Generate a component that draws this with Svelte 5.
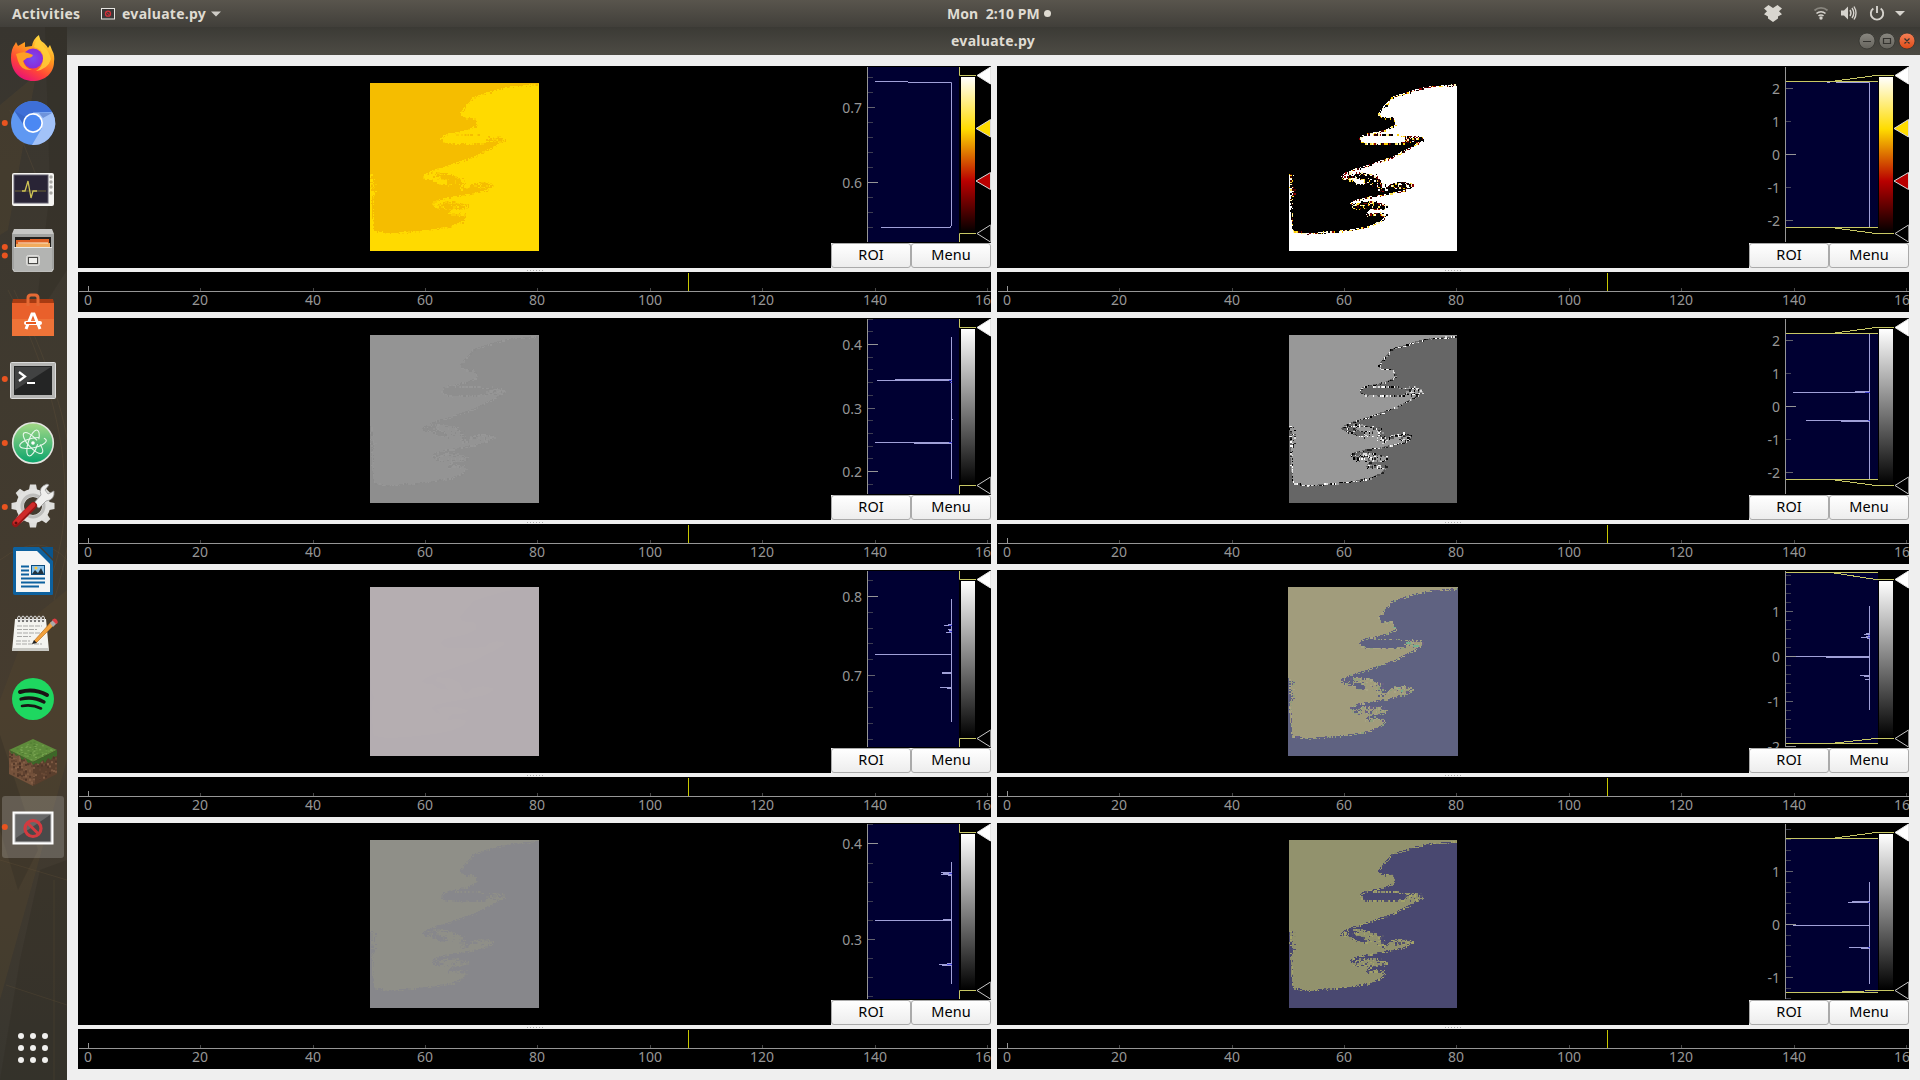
<script>
  // Outline of the left-hand domain, in plot units (504 x 504).
  const outline = [
    [0,0],[504,0],[504,4],[463,7],[413,11],[373,21],[333,34],[306,43],[298,56],[283,71],[269,89],[271,99],
    [288,104],[308,104],[315,111],[318,126],[293,139],[263,147],[235,151],[218,158],[211,168],[218,176],[235,182],
    [303,182],[345,179],[355,168],[378,162],[398,165],[401,173],[384,181],[373,189],[343,203],[313,220],[273,233],
    [228,249],[188,261],[163,273],[155,281],[168,288],[188,291],[204,302],[232,306],[222,290],[195,280],[201,269],
    [238,272],[268,286],[278,311],[290,318],[304,303],[338,296],[366,302],[369,308],[343,322],[293,333],[233,343],
    [198,351],[183,361],[195,374],[210,379],[201,365],[222,357],[256,357],[292,368],[284,377],[246,378],[235,388],
    [231,396],[248,395],[262,392],[288,400],[276,414],[243,428],[188,439],[123,446],[53,451],[13,444],[8,431],
    [6,341],[13,331],[3,308],[3,276],[0,268]
  ];
  const shape = 'M' + outline.map((p) => p.join(' ')).join('L') + 'Z';
  const CELL = 3.94;

  function rng(seed) {
    let s = seed;
    return () => ((s = (s * 1664525 + 1013904223) % 4294967296) / 4294967296);
  }

  // Noisy cells along the outline and inside the turbulent pockets.
  function speckle(palette, seed, density) {
    const r = rng(seed);
    const out = palette.map(() => '');
    const put = (x, y) => {
      const cx = Math.round(x / CELL), cy = Math.round(y / CELL);
      if (cx < 0 || cy < 0 || cx > 127 || cy > 127) return;
      const k = Math.floor(r() * palette.length);
      out[k] += `M${(cx * CELL).toFixed(1)} ${(cy * CELL).toFixed(1)}h4v4h-4z`;
    };
    for (let i = 2; i < outline.length - 1; i++) {
      const [x0, y0] = outline[i], [x1, y1] = outline[i + 1];
      const n = Math.ceil(Math.hypot(x1 - x0, y1 - y0) / 3.5);
      for (let j = 0; j < n; j++) {
        if (r() < density) put(x0 + ((x1 - x0) * j) / n + (r() - 0.5) * 2.5, y0 + ((y1 - y0) * j) / n + (r() - 0.5) * 2.5);
      }
    }
    // Upper rim of the long tongue.
    for (let x = 235; x < 385; x += 4) if (r() < density) put(x, 151 + (x - 235) * 0.05);
    const pockets = [[372,167,28,14,50],[338,305,34,12,60],[276,310,14,14,26],[186,278,28,12,30],
      [250,290,36,18,30],[240,365,52,13,90],[262,393,30,6,20],[8,305,10,36,26]];
    for (const [cx, cy, rx, ry, n] of pockets) {
      for (let j = 0; j < n * density; j++) {
        const a = r() * 6.283, d = Math.sqrt(r());
        put(cx + Math.cos(a) * rx * d, cy + Math.sin(a) * ry * d);
      }
    }
    return out.map((d, i) => ({ d, fill: palette[i] }));
  }

  const range = (start, step, n) => Array.from({ length: n }, (_, i) => Math.floor(start + step * i));

  // major: [y, label, tick length]; curve: one path per histogram
  const views = [
    { h: 202, side: 0, heat: true, a: '#f5bd00', b: '#ffda00', sp: ['#f5bd00', '#ffda00', '#fbcc00'], den: .7,
      major: [[41, '0.7', 7], [116, '0.6', 10]], minor: [11, 26, 56, 71, 86, 101, 131, 146, 161],
      curve: 'M54 15.5H87M87 16.5H130.5V160M129.500 160V161.500H60' },
    { h: 202, side: 1, heat: true, a: '#000', b: '#fff', sp: ['#ffe34d', '#ffcf00', '#8c0000', '#000', '#fff', '#450000', '#fff6b8', '#000'], den: .95,
      major: [[22, '2', 7], [55, '1', 5], [88, '0', 10], [121, '-1', 5], [154, '-2', 7]], minor: [],
      region: [15, 161], curve: 'M88 16.500H91M97 16.500H130.500V161' },
    { h: 202, side: 0, a: '#949494', b: '#8e8e8e', sp: ['#949494', '#8c8c8c', '#979797'], den: .8,
      major: [[26, '0.4', 10], [90, '0.3', 7], [153, '0.2', 10]], minor: [1, 13, 39, 51, 64, 77, 102, 115, 128, 140, 166],
      curve: 'M130.500 19V161M56 62.500H130M74 61.500H130M54 124.500H130M93 125.500H130M130 101.500H132', dots: [[128, 62], [129, 64], [128, 124]] },
    { h: 202, side: 1, a: '#989898', b: '#666', sp: ['#fff', '#000', '#ddd', '#222', '#555', '#989898'], den: 1.1,
      major: [[22, '2', 7], [55, '1', 5], [88, '0', 10], [121, '-1', 5], [154, '-2', 7]], minor: [],
      region: [15, 161], curve: 'M130.500 15V161M54 74.500H130M116 73.500H130M67 102.500H130M102 103.500H130', dots: [[126, 74], [129, 102]] },
    { h: 203, side: 0, a: '#b5aeb1', b: '#b4adb1', sp: [], den: 0,
      major: [[26, '0.8', 10], [105, '0.7', 7]], minor: [10, 42, 58, 73, 89, 121, 137, 153, 169],
      curve: 'M130.500 29V152M54 84.500H130M123 55.500H130M127 54.500H130M127 59.500H130M128 60.500H130M125 62.500H130M121 102.500H130M121 103.500H130M119 117.500H130M126 118.500H130', dots: [[128, 55], [128, 61]] },
    { h: 203, side: 1, a: '#a19c7c', b: '#5f6281', sp: ['#a19c7c', '#5f6281', '#6b6186', '#8f9f7c', '#a8a584'], den: 1, tint: true,
      major: [[41, '1', 7], [86, '0', 10], [131, '-1', 7], [176, '-2', 10]], minor: [5, 14, 23, 32, 50, 59, 68, 77, 95, 104, 113, 122, 140, 149, 158, 167],
      region: [2, 173], curve: 'M130.500 36V140M57 86.500H130M87 87.500H130M127 63.500H130M125 64.500H130M127 66.500H130M122 67.500H130M128 68.500H130M121 105.500H130M125 106.500H130M126 109.500H130', dots: [[129, 65], [129, 67]] },
    { h: 202, side: 0, a: '#8f8f88', b: '#87878b', sp: ['#8f8f88', '#87878b', '#8b8b89'], den: .9,
      major: [[20, '0.4', 10], [116, '0.3', 7]], minor: [1, 40, 59, 78, 97, 135, 154, 173],
      curve: 'M130.500 39V161M54 97.500H130M122 96.500H130M120 49.500H130M122 50.500H130M120 51.500H130M127 52.500H130M118 141.500H130M126 140.500H130M121 142.500H130', dots: [[128, 50], [126, 141]] },
    { h: 202, side: 1, a: '#92926d', b: '#494870', sp: ['#92926d', '#494870', '#8c8d6c', '#55546e', '#a2a269'], den: 1,
      major: [[48, '1', 7], [101, '0', 10], [154, '-1', 7]], minor: [...range(6, 10.6, 4), ...range(59, 10.6, 4), ...range(112, 10.6, 4), 165, 175],
      region: [15, 169], curve: 'M130.500 59V161M54 102.500H130M109 79.500H130M113 78.500H130M110 124.500H130M122 125.500H130', dots: [[129, 79], [129, 124]] }
  ].map((v, i) => ({ ...v, cells: v.sp.length ? speckle(v.sp, 91 + i * 17, v.den) : [] }));

  const times = [0, 20, 40, 60, 80, 100, 120, 140, 160].map((t, i) => ({ t, x: Math.floor(10.2 + i * 112.4) }));

  const dock = ['firefox', 'chromium', 'monitor', 'files', 'software', 'terminal', 'atom', 'tools', 'writer', 'notes', 'spotify', 'block', 'viewer'];
  const running = { chromium: [0], files: [-4, 4.5], terminal: [0], atom: [0], tools: [0], viewer: [0] };
  const teeth = [0, 45, 90, 135, 180, 225, 270, 315];
  const rings = [0, 1, 2, 3, 4, 5, 6];
  const grass = rng(5);
  const blockCells = Array.from({ length: 190 }, () => {
    const left = grass() < 0.5, u = Math.floor(grass() * 12) * 2, w = Math.floor(grass() * 13) * 2;
    return { x: left ? 9 + u : 33 + u, y: left ? 751 + u / 2 + w * .82 : 762 - u / 2 + w * .82, c: ['#5b3f2e', '#8a634a', '#6f4d38', '#4a3226'][Math.floor(grass() * 4)] };
  });
  const topCells = Array.from({ length: 70 }, () => {
    const u = grass() * 10.500, w = grass() * 10.500;
    return { x: 32 + (u - w) * 2, y: 740 + u + w, c: ['#6c9a45', '#4f7c32', '#7aa552'][Math.floor(grass() * 3)] };
  });
</script>

<div class="desktop">
  <header class="topbar">
    <span class="activities">Activities</span>
    <svg class="appicon" width="14" height="12" viewBox="0 0 14 12">
      <rect x=".5" y=".5" width="13" height="10.500" fill="#3b3838" stroke="#e6e4e0" />
      <circle cx="7" cy="5.700" r="2.500" fill="none" stroke="#d8303a" stroke-width="1.300" /><path d="M5.500 4.200l3 3" stroke="#d8303a" />
    </svg>
    <span class="appname">evaluate.py</span>
    <svg class="caret" width="10" height="6" viewBox="0 0 10 6"><path d="M0 .5h10L5 5.500z" fill="#cfccc6" /></svg>
    <span class="clock">Mon&nbsp; 2:10 PM</span><span class="bullet"></span>
    <svg class="tray" width="140" height="27" viewBox="1764 0 140 27" fill="none" stroke="#d6d3cd">
      <path fill="#d9d6cf" stroke="none" d="M1768.500 5l4.500 3 4.500-3 4.500 3.400-3 2.800 3 3-4 2.300v2l-5 3.500-5-3.500v-2l-4-2.300 3-3-3-2.800z" />
      <g transform="translate(1821 0)"><path d="M-6.500 10.500a9.500 9.500 0 0 1 13 0" stroke="#88857e" stroke-width="1.800" /><path d="M-4.500 13.500a6.500 6.500 0 0 1 9 0M-2.500 16a3.500 3.500 0 0 1 5 0" stroke-width="1.600" /><circle cy="18" r="1.700" fill="#d6d3cd" stroke="none" /></g>
      <path fill="#d6d3cd" stroke="none" d="M1841 10.500h3l4-4v13l-4-4h-3z" /><path d="M1850 10q2 3 0 6M1852 8q3.500 5 0 10M1854 6.500q4 6.500 0 13" stroke-width="1.400" />
      <path d="M1873.300 8.500a6.200 6.200 0 1 0 7.400 0M1877 6v7" stroke-width="1.900" />
      <path fill="#d6d3cd" stroke="none" d="M1895 11h10l-5 5z" />
    </svg>
  </header>

  <div class="body">
    <nav class="dock">
      <svg class="wall" width="67" height="1053" viewBox="0 27 67 1053" preserveAspectRatio="none">
        <path fill="#57462f" opacity=".32" d="M0 105L36 75 8 230 0 235zM0 700L30 620 67 590V760L0 1000zM15 660L67 630V690L10 790z" />
        <path fill="#2a2822" opacity=".28" d="M45 27H67V270L35 320 50 190zM0 735L38 850 18 890 0 830zM40 870L67 860V1080H0L20 960z" />
        <path fill="none" stroke="#6a573b" opacity=".25" d="M8 290C70 410 80 520 45 590M14 290C80 430 85 500 54 600M10 110L40 185M0 860L67 880M6 985L67 1005M54 880V1080M0 560Q40 530 67 560" />
      </svg>
      {#each dock as name, i}
        <div class="slot" class:active={name === 'viewer'}>
          <svg width="67" height="64" viewBox="0 {27 + 64 * i} 67 64">
            {#if name === 'viewer'}<rect x="2" y="796" width="62" height="62" rx="3" fill="#fff" opacity=".19" />{/if}
            {#each running[name] ?? [] as dy}<circle cx="4.800" cy={59 + 64 * i + dy} r="3" fill="#e95420" />{/each}
            {#if name === 'firefox'}
              <defs>
                <linearGradient id="ff" x1=".85" y1="0" x2=".3" y2="1"><stop offset="0" stop-color="#fff44f" /><stop offset=".4" stop-color="#ff9a1e" /><stop offset=".72" stop-color="#ff4438" /><stop offset="1" stop-color="#e8107a" /></linearGradient>
                <radialGradient id="ffp"><stop offset="0" stop-color="#7a4af0" /><stop offset="1" stop-color="#8a2bd8" /></radialGradient>
              </defs>
              <path fill="url(#ff)" d="M11 58Q11 49 15 44l1-2 2 4 7-4v5l7-1q1-7 7-11 0 5 5 8 3 3 4 5l2-3 2 5q3 5 2 12C54 73 45 81 33 81S11 72 11 58z" />
              <path fill="#ffcf38" d="M39 36q-4 5-5 11 9 2 9 11 0 9-7 13 12-2 15-12-2-8-6-11-5-5-6-12z" opacity=".85" />
              <circle cx="33" cy="58.500" r="10" fill="url(#ffp)" />
              <path fill="#ff9f24" d="M16 54q7-3 12-1l5 2q-1 3-6 3l-4 3q2 7 9 9-11 1-14-9z" />
            {:else if name === 'chromium'}
              <circle cx="33" cy="123" r="22" fill="#5f98f2" /><path fill="#3e6fd7" d="M14.500 111A22 22 0 0 1 52 112L33 113l-10 11z" />
              <path fill="#a2c2f8" d="M33 112.500H52.500A22 22 0 0 1 32 145l10-17z" /><path fill="#315bb5" opacity=".45" d="M14.500 111l9 13 2-7zM39 113h13l-9 5z" />
              <circle cx="33" cy="123" r="10" fill="#fff" /><circle cx="33" cy="123" r="8.300" fill="#4b88f3" />
            {:else if name === 'monitor'}
              <rect x="12" y="173" width="42" height="33" rx="2" fill="#f5f4f1" /><rect x="14" y="175" width="34" height="28" fill="#292436" stroke="#656070" />
              <path d="M15 191h31" stroke="#6d6234" /><path d="M22 191h3l3-10 3 17 2-7h4" fill="none" stroke="#d0c455" stroke-width="1.300" />
              {#each [177, 182, 187, 193] as y}<circle cx="51" cy={y} r="1.700" fill="#aaa9a5" />{/each}
            {:else if name === 'files'}
              <path d="M14 229h38l2 5v35l-2 3H14l-2-3v-35z" fill="#c7c7c5" /><path d="M12 234h42v35H12z" fill="#a2a3a1" /><rect x="15" y="237" width="36" height="13" fill="#211f1d" />
              <path d="M16 240h14v-1h19v9H16z" fill="#df6226" /><path d="M16 244l34-1v5H16z" fill="#f1aa5c" /><path d="M18 243h30" stroke="#fff0d0" />
              <rect x="14" y="247" width="38" height="24.500" fill="#b3b4b2" /><path d="M14 247.500h38" stroke="#e9e9e7" />
              <rect x="26.500" y="255.500" width="13" height="10" rx="2" fill="#c9c9c6" stroke="#dededc" /><rect x="28.500" y="257.500" width="9" height="6" fill="#efefec" stroke="#4a4a48" />
            {:else if name === 'software'}
              <path d="M13 299h40l1 4H12z" fill="#a83b12" /><rect x="12" y="303" width="42" height="33" fill="#ee7338" /><path d="M12 303h42v16H12z" fill="#e9602b" />
              <path d="M28 306v-8q0-3 3-3h4q3 0 3 3v8" fill="none" stroke="#e56a35" stroke-width="3" />
              <path d="M26 329l6-15h2l6 15" fill="none" stroke="#fff" stroke-width="3" /><rect x="24" y="321" width="18" height="4" rx="2" fill="#fff" /><path d="M26 323h10" stroke="#e95b20" stroke-width="2" />
            {:else if name === 'terminal'}
              <rect x="10.500" y="362.500" width="45" height="36" rx="1" fill="#b5b5b3" stroke="#ddd" /><rect x="14" y="366" width="38" height="29" fill="#242525" /><path d="M15 367h36L15 390z" fill="#414242" />
              <path d="M19 372l6 4.500-6 4.500" fill="none" stroke="#fff" stroke-width="2.200" /><path d="M27 383h8" stroke="#fff" stroke-width="2" />
            {:else if name === 'atom'}
              <defs><linearGradient id="at" x2="0" y2="1"><stop offset="0" stop-color="#a5d986" /><stop offset="1" stop-color="#0aa46c" /></linearGradient></defs>
              <circle cx="33" cy="443" r="20.300" fill="url(#at)" stroke="#e3e5e0" stroke-width="1.600" />
              <g fill="none" stroke="#e9f8ec" stroke-width="1.100"><ellipse cx="33" cy="443" rx="13.500" ry="4.800" transform="rotate(-12 33 443)" stroke-dasharray="52 5" /><ellipse cx="33" cy="443" rx="13.500" ry="4.800" transform="rotate(48 33 443)" stroke-dasharray="46 5" /><ellipse cx="33" cy="443" rx="13.500" ry="4.800" transform="rotate(108 33 443)" stroke-dasharray="40 5" /></g><circle cx="33" cy="443" r="1.800" fill="#fff" />
            {:else if name === 'tools'}
              {#each teeth as t}<path d="M28.500 492l1.500-7.500h6l1.500 7.500z" fill="#dededc" transform="rotate({t} 33 506)" />{/each}
              <circle cx="33" cy="506" r="13" fill="none" stroke="#e2e2e0" stroke-width="8" /><circle cx="33" cy="506" r="11" fill="none" stroke="#bdbdbb" stroke-width="3" />
              <path d="M33 504l8-9q-3-8 6-11l2 1-4 5 3 4 6-3q1 9-8 10l-7 7z" fill="#efefee" stroke="#999" stroke-width=".8" />
              <path d="M15.500 523.500l18-18" stroke="#941616" stroke-width="7" stroke-linecap="round" /><path d="M15.500 522.500l17.500-17.500" stroke="#cf2a2a" stroke-width="4.600" stroke-linecap="round" /><circle cx="16" cy="523" r="1.500" fill="#5d0e0e" />
            {:else if name === 'writer'}
              <path d="M14 547h25l14 14v33q0 1-1 1H15q-2 0-2-2v-45z" fill="#0d619f" /><path d="M16 551h21l13 13v28H16z" fill="#f5f6f6" /><path d="M41 547h12v12z" fill="#0a548b" />
              <path d="M21 566.500h8M21 570.500h8M21 574.500h8M21 578.500h24M21 582.500h24M21 586.500h18" stroke="#0d619f" stroke-width="2" /><rect x="31.500" y="565.500" width="13" height="9" fill="#8bc4ec" stroke="#0d4d7f" /><path d="M32 574l3-4 3 3 3-5 3 6z" fill="#22333e" /><circle cx="36" cy="568" r="1.500" fill="#ffc73a" />
            {:else if name === 'notes'}
              <path d="M15 619h31l3 32H12z" fill="#f4f4f0" /><path d="M12 648h37v3H12z" fill="#c8c8c3" />
              {#each rings as n}<ellipse cx={19 + n * 4} cy="619" rx="1.500" ry="3" fill="none" stroke="#ddd" /><circle cx={19 + n * 4} cy="621" r="1" fill="#555" />{/each}
              <path d="M17 626h25M17 629.500h20M17 633h25M17 636.500h14M16 641h14M16 644h26" stroke="#a9a9a7" stroke-dasharray="5 1" />
              <path d="M34 641L51 622l3 3-18 18z" fill="#f2a13c" stroke="#b87020" stroke-width=".7" /><path d="M50 623l3-3 4 3-4 4z" fill="#aaa" /><path d="M52 620q3-3 5 0t-1 4z" fill="#dc3d42" /><path d="M32 644l2-4 3 3z" fill="#222" />
            {:else if name === 'spotify'}
              <circle cx="33" cy="699" r="21" fill="#1ed760" /><g fill="none" stroke="#191414" stroke-linecap="round"><path d="M20 692q14-4 27 3" stroke-width="4" /><path d="M21 699q12-3 23 3" stroke-width="3.300" /><path d="M22 706q10-2 19 2.500" stroke-width="2.600" /></g>
            {:else if name === 'block'}
              <path d="M33 739l24 11-24 12L9 750z" fill="#5e8b3b" /><path d="M9 750l24 12v24L9 774z" fill="#75523b" /><path d="M57 750l-24 12v24l24-12z" fill="#5a3f2d" />
              {#each blockCells as c}<rect x={c.x} y={c.y} width="2" height="2" fill={c.c} opacity=".75" />{/each}
              {#each topCells as c}<rect x={c.x} y={c.y} width="2" height="1" fill={c.c} />{/each}
              <path d="M9 750l24 12 24-12v6l-3 1v-2l-3 5-3-2-3 5-2-3-4 4-3-1-3 2-2-3-3 1-3-5-3 2-3-5-3 1-2-3-2 1z" fill="#3c6728" />
            {:else}
              <rect x="13.500" y="812.500" width="39" height="31" fill="#bbb" stroke="#fff" stroke-width="2" /><rect x="15.500" y="814.500" width="35" height="27" fill="#494949" /><path d="M16 815h34L16 838z" fill="#676767" />
              <circle cx="33" cy="828.500" r="8" fill="none" stroke="#d33b40" stroke-width="3.200" /><path d="M27.500 823l11 11" stroke="#d33b40" stroke-width="3" />
            {/if}
          </svg>
        </div>
      {/each}
      <div class="apps">{#each Array(9) as _}<i></i>{/each}</div>
    </nav>

    <main class="window">
      <div class="titlebar">
        <span class="title">evaluate.py</span>
        <svg class="controls" width="58" height="20" viewBox="1858 31 58 20" fill="none" stroke="#34332f" stroke-width="1.200">
          <defs><linearGradient id="wb" x2="0" y2="1"><stop offset="0" stop-color="#8a8881" /><stop offset="1" stop-color="#65635c" /></linearGradient><linearGradient id="wc" x2="0" y2="1"><stop offset="0" stop-color="#f58158" /><stop offset="1" stop-color="#df4a16" /></linearGradient></defs>
          <circle cx="1867" cy="41" r="8" fill="url(#wb)" stroke-width=".8" /><circle cx="1887" cy="41" r="8" fill="url(#wb)" stroke-width=".8" /><circle cx="1907" cy="41" r="8" fill="url(#wc)" stroke-width=".8" />
          <path d="M1863 41.500h8M1883.500 38.500h7v5h-7zM1904.500 38.500l5 5M1909.500 38.500l-5 5" />
        </svg>
      </div>

      <div class="grid">
        {#each views as v}
          <section class="cell">
            <div class="view" class:tall={v.h === 203}>
              <svg class="plot" class:left={v.side === 0} class:wide={v.tint} width="168" height="168" viewBox="0 0 504 504" preserveAspectRatio="none" shape-rendering="crispEdges">
                <rect width="504" height="504" fill={v.b} />
                <path d={shape} fill={v.a} />
                {#each v.cells as c}<path d={c.d} fill={c.fill} />{/each}
                {#if v.tint}
                  <path fill="#76b090" d="M312 118h8v4h-8zM350 165h14v5h-14zM372 174h16v6h-16zM326 300h5v4h-5zM334 308h8v4h-8z" />
                {/if}
              </svg>
              <svg class="hist" width="170" height={v.h} viewBox="0 0 170 {v.h}">
                <defs>
                  <linearGradient id="heat" x2="0" y2="1"><stop offset="0" stop-color="#fff" /><stop offset=".333" stop-color="#ffdc00" /><stop offset=".667" stop-color="#b90000" /><stop offset="1" stop-color="#000" /></linearGradient>
                  <linearGradient id="gray" x2="0" y2="1"><stop offset="0" stop-color="#fff" /><stop offset="1" stop-color="#000" /></linearGradient>
                </defs>
                {#if v.region}
                  <rect x="47" y={v.region[0]} width="92" height={v.region[1] - v.region[0]} fill="#000032" />
                {:else}
                  <rect x="47" y="1" width="92" height={v.h - 27} fill="#000032" />
                {/if}
                <path d="M46.500 1V{v.h - 26}" stroke="#969696" />
                {#each v.minor as y}<path d="M47 {y + .5}h5" stroke="#3c3c50" />{/each}
                {#each v.major as [y, label, len]}
                  <path d="M47 {y + .5}h{len}" stroke={len === 10 ? '#969696' : len === 7 ? '#64646e' : '#46465a'} />
                  <text x="41" y={y + 6} text-anchor="end">{label}</text>
                {/each}
                <path d={v.curve} fill="none" stroke="#a0a0d8" />
                {#each v.dots ?? [] as [x, y]}<rect {x} {y} width={131 - x} height="1" fill="#4646d8" />{/each}
                {#if v.region}
                  <path fill="none" stroke="#c8c864" shape-rendering="crispEdges" d="M47 {v.region[0] + .5}H139M92 {v.region[0] + .5}L137 9.500H155M47 {v.region[1] + .5}H139M92 {v.region[1] + .5}L137 {v.h - 34.500}H155" />
                {:else}
                  <rect x="138" y="1" width="32" height={v.h - 27} fill="#000" />
                  <path fill="none" stroke="#c8c864" d="M138.500 1V9.500H155M138.500 {v.h - 26}V{v.h - 34.500}H155" />
                {/if}
                <rect x="139" y="10" width="16" height={v.h - 45} fill="#000" />
                <rect x="140" y="11" width="14" height={v.h - 46} fill={v.heat ? 'url(#heat)' : 'url(#gray)'} />
                <path d="M156 9.500L169.500 1V18z" fill="#fff" stroke="#e6e6e6" />
                {#if v.heat}
                  <path d="M155 62.500L169.500 53.500V71z" fill="#ffdc00" stroke="#dcdcdc" />
                  <path d="M155 115L169.500 106.500V123.500z" fill="#b90000" stroke="#dcdcdc" />
                {/if}
                <path d="M156 {v.h - 34.500}L169.500 {v.h - 43}V{v.h - 26}z" fill="#000" stroke="#c8c8c8" /><path d="M169.500 {v.h - 43}v17" stroke="#888" />
              </svg>
              <div class="buttons"><button>ROI</button><button>Menu</button></div>
            </div>
            <div class="splitter"><i></i><i></i><i></i><i></i><i></i><i></i></div>
            <svg class="timeline" height="40">
              <path d="M1 19.500H913" stroke="#969696" />
              {#each times as { t, x }}
                <path d="M{x + .5} {t ? 16 : 14}V19" stroke={t ? '#464646' : '#969696'} />
                <text {x} y="33" text-anchor="middle">{t}</text>
              {/each}
              <path d="M610.500 1V19" stroke="#c8c800" />
            </svg>
          </section>
        {/each}
      </div>
    </main>
  </div>
</div>

<style>
  :global(body) { margin: 0; overflow: hidden; background: #efefef; }
  .desktop { width: 1920px; height: 1080px; display: flex; flex-direction: column; font-family: "Noto Sans", "Open Sans", sans-serif; }
  svg { display: block; }
  .topbar { height: 27px; flex: none; display: flex; align-items: center; background: linear-gradient(#59554d, #413f3a); color: #dfdbd2; font-size: 14px; font-weight: 700; white-space: pre; }
  .topbar span { line-height: 27px; }
  .activities { width: 89px; padding-left: 12px; box-sizing: border-box; letter-spacing: .35px; }
  .activities { width: 101px; }
  .appicon { flex: none; }
  .appname { width: 84px; margin-left: 7px; letter-spacing: .28px; }
  .caret { margin-left: 5px; }
  .clock { margin-left: 726px; width: 93px; letter-spacing: .08px; }
  .topbar .bullet { width: 7px; height: 7px; border-radius: 50%; background: #dfdbd2; margin-left: 4px; }
  .tray { margin-left: auto; margin-right: 16px; overflow: visible; }
  .body { flex: 1; display: flex; min-height: 0; }
  .dock { position: relative; width: 67px; flex: none; display: flex; flex-direction: column; background: linear-gradient(#38352f, #403a2f 35%, #463c2f 65%, #38362f); }
  .wall { position: absolute; inset: 0; }
  .slot { height: 64px; position: relative; }
  .apps { position: relative; margin: auto 0 17px 18px; display: grid; grid-template-columns: repeat(3, 6px); gap: 6px; }
  .apps i { width: 6px; height: 6px; border-radius: 50%; background: #f1f0ee; }
  .window { flex: 1; display: flex; flex-direction: column; background: #efefef; }
  .titlebar { height: 28px; display: flex; align-items: center; justify-content: flex-end; background: linear-gradient(#3b3a35, #4d4b44); color: #dfdbd2; font-size: 14px; font-weight: 700; }
  .title { width: 84px; letter-spacing: .28px; line-height: 28px; }
  .controls { margin-left: 823px; margin-right: 4px; }
  .grid { display: grid; grid-template-columns: 913px 912px; gap: 6px; padding: 11px; }
  .cell { display: flex; flex-direction: column; min-width: 0; }
  .view { position: relative; height: 202px; background: #000; display: flex; justify-content: space-between; padding-left: 292px; box-sizing: border-box; }
  .view.tall { height: 203px; }
  .plot { margin-top: 17px; width: 168px; height: 168px; }
  .plot.left { width: 169px; }
  .tall .plot { width: 169px; height: 169px; }
  .tall .plot.wide { width: 170px; margin-left: -1px; }
  .hist text, .timeline text { font-family: "Noto Sans", sans-serif; font-size: 14px; fill: #969696; }
  .buttons { position: absolute; right: 0; bottom: 0; display: flex; background: #eee; }
  button { width: 80px; height: 25px; padding: 0 0 2px; border: 1px solid #aaa; border-radius: 3px; background: linear-gradient(#fff, #ededed); color: #000; font: 14.5px/21px "Noto Sans", sans-serif; }
  .splitter { height: 4px; display: flex; justify-content: center; align-items: center; gap: 2px; }
  .splitter i { width: 1px; height: 1px; background: #aaa; }
  .timeline { width: 100%; background: #000; overflow: hidden; }
</style>
